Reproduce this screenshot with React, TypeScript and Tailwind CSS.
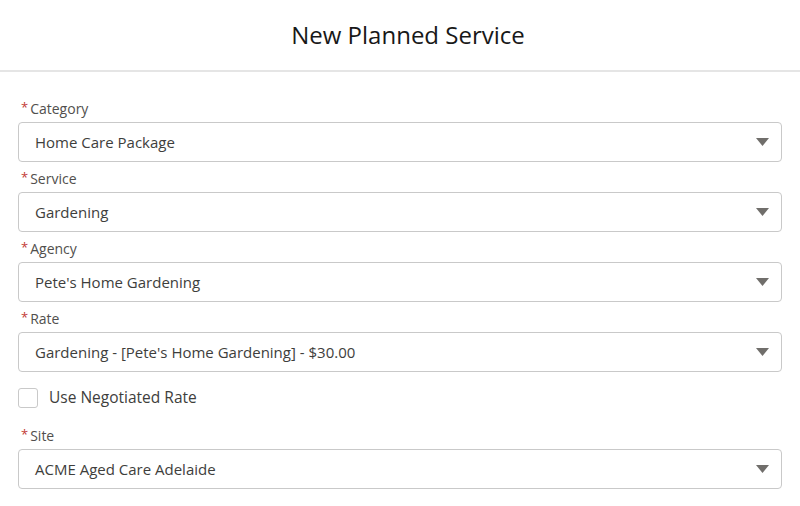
const fields = [
  { label: "Category", value: "Home Care Package" },
  { label: "Service", value: "Gardening" },
  { label: "Agency", value: "Pete's Home Gardening" },
  { label: "Rate", value: "Gardening - [Pete's Home Gardening] - $30.00" },
]

function Picklist({ label, value }: { label: string; value: string }) {
  return (
    <div className="flex flex-col">
      <div className="flex h-5 items-center text-[14px] text-[#514f4d]">
        <span className="ml-[3px] mr-[2px] text-[13px] text-[#c23934]">*</span>
        {label}
      </div>
      <div className="mt-1 flex h-10 items-center justify-between rounded-[4px] border border-[#c9c9c9] bg-white pl-4 pr-3">
        <span className="text-[15px] text-[#3e3e3c]">{value}</span>
        <svg width="13" height="8" viewBox="0 0 13 8">
          <path d="M0 0 L13 0 L6.5 8 Z" fill="#706e6b" />
        </svg>
      </div>
    </div>
  )
}

export default function App() {
  return (
    <div className="min-h-[506px] bg-white font-['Open_Sans',sans-serif]">
      <div className="flex h-[72px] items-center justify-center border-b-2 border-[#e5e5e5] pl-4">
        <h1 className="text-[24px] text-[#181818]">New Planned Service</h1>
      </div>
      <div className="flex flex-col px-[18px] pt-[26px]">
        <div className="flex flex-col gap-[6px]">
          {fields.map((f) => (
            <Picklist key={f.label} label={f.label} value={f.value} />
          ))}
        </div>
        <div className="mt-4 flex h-5 items-center gap-[11px]">
          <div className="h-5 w-5 rounded-[3px] border border-[#c9c9c9] bg-white" />
          <span className="text-[15.5px] text-[#3e3e3c]">Use Negotiated Rate</span>
        </div>
        <div className="mt-[17px]">
          <Picklist label="Site" value="ACME Aged Care Adelaide" />
        </div>
      </div>
    </div>
  )
}
